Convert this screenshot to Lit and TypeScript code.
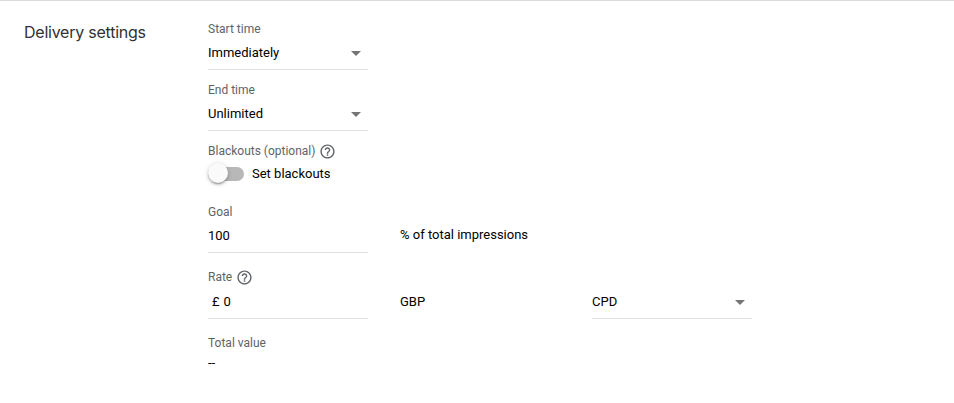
import { LitElement, html, css } from "lit";
import { customElement } from "lit/decorators.js";

const help = html`<svg class="help" viewBox="0 0 24 24"><path d="M11 18h2v-2h-2v2zm1-16C6.48 2 2 6.48 2 12s4.48 10 10 10 10-4.48 10-10S17.52 2 12 2zm0 18c-4.41 0-8-3.59-8-8s3.59-8 8-8 8 3.59 8 8-3.59 8-8 8zm0-14c-2.21 0-4 1.79-4 4h2c0-1.1.9-2 2-2s2 .9 2 2c0 2-3 1.75-3 5h2c0-2.25 3-2.5 3-5 0-2.21-1.79-4-4-4z"/></svg>`;

const select = (value: string) => html`<div class="field select"><span>${value}</span><i class="arrow"></i></div>`;

@customElement("app-root")
export class AppRoot extends LitElement {
  static styles = css`
    :host { display: block; height: 403px; box-sizing: border-box; border-top: 1px solid #dadce0; background: #fff; font: 400 13px/20px Roboto, sans-serif; color: #000; overflow: hidden; }
    .panel { display: grid; grid-template-columns: 184px 1fr; padding-left: 24px; }
    h2 { margin: 19px 0 0; font: 400 16px/24px Inter, Roboto, sans-serif; letter-spacing: -0.24px; color: #303134; white-space: nowrap; }
    .form { padding-top: 20px; }
    .group { height: 61px; }
    .goal { height: 65px; }
    .rate { height: 66px; }
    .label { display: flex; align-items: center; height: 16px; font-size: 12px; line-height: 16px; color: #5f6368; }
    .help { width: 17px; height: 17px; margin-left: 4px; fill: #5f6368; }
    .row { display: grid; grid-template-columns: 160px 160px 160px; column-gap: 32px; }
    .rate .row { margin-top: 1px; }
    .field { box-sizing: border-box; width: 160px; height: 33px; padding-top: 6px; border-bottom: 1px solid #e0e0e0; }
    .select { display: flex; justify-content: space-between; }
    .arrow { width: 0; height: 0; margin: 8px 7px 0 0; border: 5px solid transparent; border-bottom: 0; border-top-color: #757575; }
    .switch { display: flex; align-items: center; height: 20px; margin-top: 5px; }
    .track { width: 36px; height: 14px; border-radius: 7px; background: #b8b8b8; display: flex; align-items: center; margin-right: 8px; }
    .thumb { width: 20px; height: 20px; margin-top: -2px; border-radius: 50%; background: #fafafa; box-shadow: 0 2px 2px rgba(0,0,0,.14), 0 3px 1px -2px rgba(0,0,0,.2), 0 1px 5px rgba(0,0,0,.2); }
    .money { padding-left: 4px; word-spacing: 0.8px; }
    .unit { padding-top: 5px; }
    .rate .unit { padding-top: 6px; }
    .total { margin-top: 2px; }
  `;
  render() {
    return html`<section class="panel">
      <h2>Delivery settings</h2>
      <div class="form">
        <div class="group"><div class="label">Start time</div>${select("Immediately")}</div>
        <div class="group"><div class="label">End time</div>${select("Unlimited")}</div>
        <div class="group"><div class="label">Blackouts (optional)${help}</div>
          <div class="switch"><span class="track"><span class="thumb"></span></span><span>Set blackouts</span></div></div>
        <div class="goal"><div class="label">Goal</div>
          <div class="row"><div class="field">100</div><div class="unit">% of total impressions</div></div></div>
        <div class="rate"><div class="label">Rate${help}</div>
          <div class="row"><div class="field money">£ 0</div><div class="unit">GBP</div>${select("CPD")}</div></div>
        <div class="label">Total value</div><div class="total">--</div>
      </div>
    </section>`;
  }
}
